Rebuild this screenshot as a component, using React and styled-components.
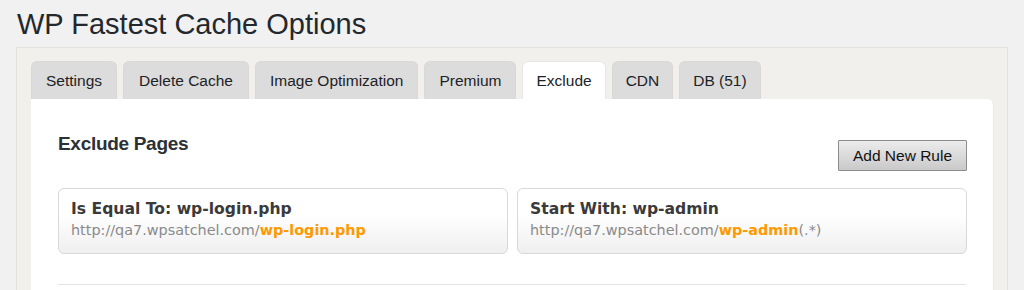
import React from "react";
import styled, { createGlobalStyle } from "styled-components";

const Global = createGlobalStyle`
  html, body { margin: 0; padding: 0; background: #f1f1f1; }
  body { font-family: "Liberation Sans", Arial, sans-serif; color: #23282d; }
`;

const Page = styled.div`
  padding: 7px 16px 0 16px;
  width: 992px;
  height: 290px;
  overflow: hidden;
`;

const Title = styled.h1`
  margin: 0 0 0 1px;
  font-size: 29px;
  font-weight: 400;
  line-height: 35px;
  color: #23282d;
`;

const Panel = styled.div`
  margin-top: 5px;
  background: #f1f0ec;
  border: 1px solid #e4e2dc;
  padding: 13px 13px 0 14px;
  height: 300px;
  display: flex;
  flex-direction: column;
`;

const Tabs = styled.div`
  display: flex;
  gap: 6px;
  align-items: flex-end;
`;

const Tab = styled.div`
  height: 38px;
  box-sizing: border-box;
  display: flex;
  align-items: center;
  justify-content: center;
  padding: 0 ${(p) => p.$pad}px;
  font-size: 15.5px;
  color: #1d2227;
  background: ${(p) => (p.$active ? "#ffffff" : "#dcdcdc")};
  border: 1px solid ${(p) => (p.$active ? "#e6e6e6" : "#d8d8d8")};
  border-bottom: none;
  border-radius: 6px 6px 0 0;
`;

const Content = styled.div`
  flex: 1;
  background: #fff;
  border-radius: 0 6px 0 0;
  border-right: 1px solid #e8e8e8;
  padding: 34px 26px 0 27px;
`;

const HeaderRow = styled.div`
  display: flex;
  justify-content: space-between;
  align-items: flex-start;
`;

const Heading = styled.h2`
  margin: 0;
  font-size: 19px;
  font-weight: 700;
  line-height: 22px;
  color: #2c3136;
  letter-spacing: -0.3px;
`;

const Button = styled.button`
  margin-top: 7px;
  width: 129px;
  height: 31px;
  font-family: "Liberation Sans", Arial, sans-serif;
  font-size: 15.5px;
  color: #111;
  background: linear-gradient(#ececec, #c9c9c9);
  border: 1px solid #8c8c8c;
  border-radius: 1px;
  padding: 0;
`;

const Cards = styled.div`
  margin-top: 17px;
  display: grid;
  grid-template-columns: 1fr 1fr;
  gap: 9px;
`;

const Card = styled.div`
  height: 66px;
  box-sizing: border-box;
  border: 1px solid #d9d9d9;
  border-radius: 6px;
  background: linear-gradient(#ffffff 40%, #efefef);
  padding: 10px 12px 0 12px;
  font-family: "DejaVu Sans", Verdana, sans-serif;
`;

const CardTitle = styled.div`
  font-weight: 700;
  font-size: 15.6px;
  line-height: 21px;
  color: #3a3a3a;
`;

const CardUrl = styled.div`
  font-size: 14.4px;
  line-height: 20px;
  color: #8a8a8a;
`;

const Hl = styled.span`
  color: #ff9900;
  font-weight: 700;
`;

const Divider = styled.div`
  margin-top: 30px;
  border-top: 1px solid #e4e4e4;
  margin-right: 1px;
`;

const tabs = [
  ["Settings", 14],
  ["Delete Cache", 15],
  ["Image Optimization", 14],
  ["Premium", 14],
  ["Exclude", 13, true],
  ["CDN", 13],
  ["DB (51)", 13],
];

export default function App() {
  return (
    <>
      <Global />
      <Page>
        <Title>WP Fastest Cache Options</Title>
        <Panel>
          <Tabs>
            {tabs.map(([t, pad, a]) => (
              <Tab key={t} $pad={pad} $active={a}>
                {t}
              </Tab>
            ))}
          </Tabs>
          <Content>
            <HeaderRow>
              <Heading>Exclude Pages</Heading>
              <Button>Add New Rule</Button>
            </HeaderRow>
            <Cards>
              <Card>
                <CardTitle>Is Equal To: wp-login.php</CardTitle>
                <CardUrl>
                  http://qa7.wpsatchel.com/<Hl>wp-login.php</Hl>
                </CardUrl>
              </Card>
              <Card>
                <CardTitle>Start With: wp-admin</CardTitle>
                <CardUrl>
                  http://qa7.wpsatchel.com/<Hl>wp-admin</Hl>(.*)
                </CardUrl>
              </Card>
            </Cards>
            <Divider />
          </Content>
        </Panel>
      </Page>
    </>
  );
}
